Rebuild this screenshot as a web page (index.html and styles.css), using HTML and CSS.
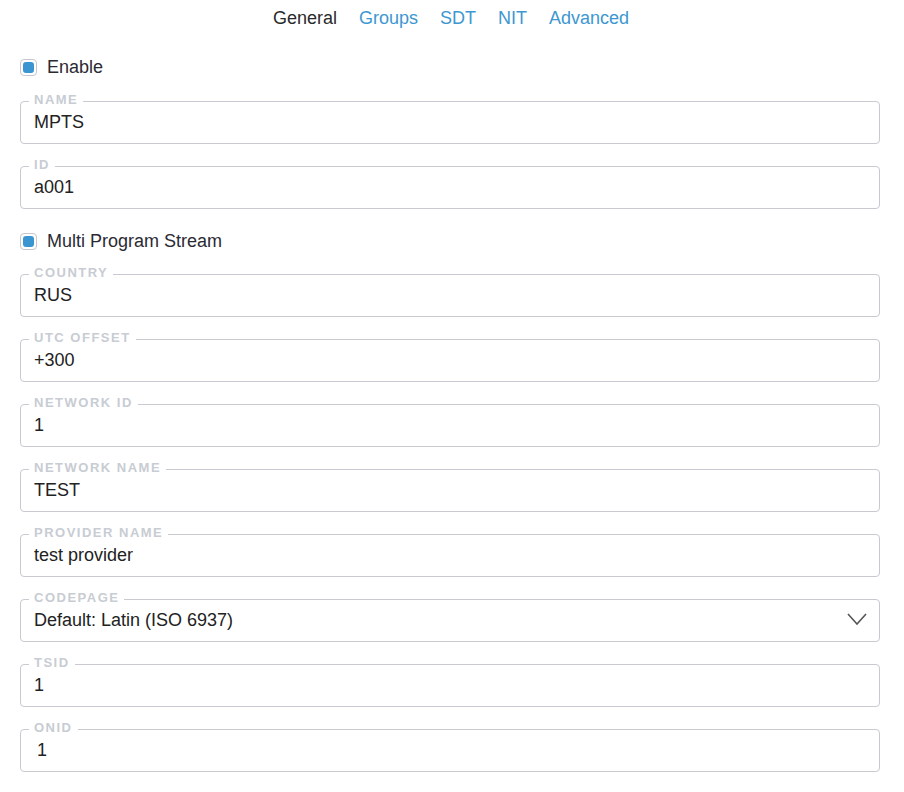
FILE: index.html
```html
<!DOCTYPE html>
<html>
<head>
<meta charset="utf-8">
<link rel="stylesheet" href="styles.css">
</head>
<body>
<div class="page">
  <nav class="tabs">
    <span class="tab active">General</span>
    <span class="tab">Groups</span>
    <span class="tab">SDT</span>
    <span class="tab">NIT</span>
    <span class="tab">Advanced</span>
  </nav>

  <label class="check-row first"><span class="box"><span class="dot"></span></span>Enable</label>

  <fieldset class="field"><legend>Name</legend><input class="value" value="MPTS"></fieldset>
  <fieldset class="field"><legend>ID</legend><input class="value" value="a001"></fieldset>

  <label class="check-row"><span class="box"><span class="dot"></span></span>Multi Program Stream</label>

  <fieldset class="field"><legend>Country</legend><input class="value" value="RUS"></fieldset>
  <fieldset class="field"><legend>UTC Offset</legend><input class="value" value="+300"></fieldset>
  <fieldset class="field"><legend>Network ID</legend><input class="value" value="1"></fieldset>
  <fieldset class="field"><legend>Network Name</legend><input class="value" value="TEST"></fieldset>
  <fieldset class="field"><legend>Provider Name</legend><input class="value" value="test provider"></fieldset>
  <fieldset class="field"><legend>Codepage</legend>
    <div class="value select"><span>Default: Latin (ISO 6937)</span>
      <svg class="chev" width="20" height="12" viewBox="0 0 20 12"><polyline points="1,1 10,11 19,1" fill="none" stroke="#555" stroke-width="1.6"/></svg>
    </div>
  </fieldset>
  <fieldset class="field"><legend>TSID</legend><input class="value" value="1"></fieldset>
  <fieldset class="field"><legend>ONID</legend><input class="value indent" value="1"></fieldset>
</div>
</body>
</html>
```

FILE: styles.css
```css
html, body {
  margin: 0;
  padding: 0;
  background: #fff;
}
body {
  font-family: "Liberation Sans", Arial, sans-serif;
  font-size: 18px;
  color: #222;
}
.page {
  padding: 0 24px 0 20px;
  display: flex;
  flex-direction: column;
}
.tabs {
  height: 48px;
  box-sizing: border-box;
  padding-top: 8px;
  display: flex;
  justify-content: center;
  gap: 22px;
  line-height: 21px;
  padding-left: 2px;
}
.tab {
  color: #3d97d1;
}
.tab.active {
  color: #2a2a2a;
}
.check-row {
  display: flex;
  align-items: center;
  height: 32px;
  margin: 3px 0 8px;
  gap: 10px;
  color: #2a2a33;
}
.check-row.first {
  margin-bottom: 9px;
}
.box {
  width: 17px;
  height: 17px;
  box-sizing: border-box;
  border: 1px solid #c6c6cc;
  border-radius: 4px;
  padding: 2px;
  display: flex;
}
.dot {
  width: 11px;
  height: 11px;
  border-radius: 3px;
  background: #3a95d0;
}
.field {
  margin: 0 0 13px;
  padding: 0 8px;
  border: 1px solid #c9c9d1;
  border-radius: 4px;
  min-width: 0;
}
.field legend {
  padding: 0 5px 3px;
  font-size: 13px;
  line-height: 15px;
  font-weight: bold;
  letter-spacing: 1.5px;
  text-transform: uppercase;
  color: #c8ccd3;
}
.value {
  display: block;
  width: 100%;
  box-sizing: border-box;
  border: 0;
  outline: none;
  margin: 0;
  padding: 2px 5px 10px;
  font-family: inherit;
  font-size: 18px;
  line-height: 21px;
  height: 33px;
  color: #222;
  background: transparent;
}
.value.indent {
  padding-left: 8px;
}
.select {
  display: flex;
  align-items: flex-start;
  justify-content: space-between;
  padding-right: 4px;
}
.chev {
  margin-top: 3px;
}
```
